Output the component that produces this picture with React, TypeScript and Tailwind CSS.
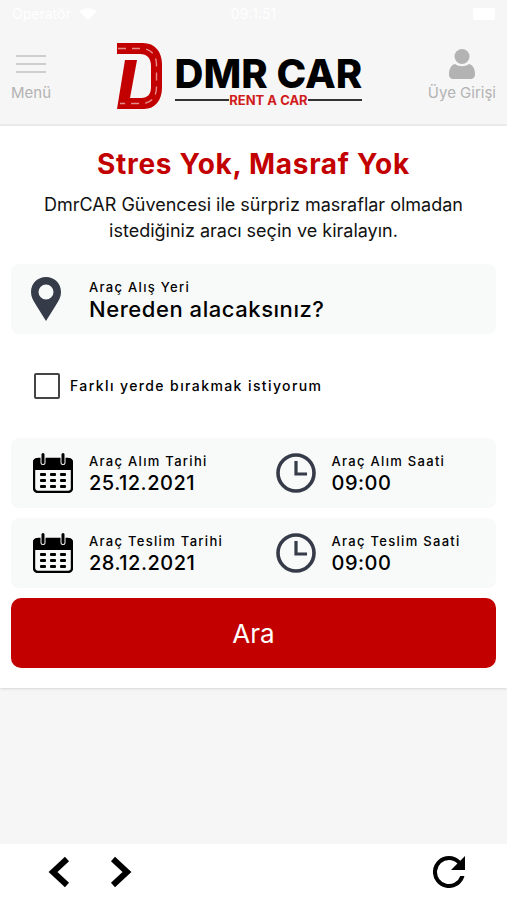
import { useState } from "react"
import type { ReactNode } from "react"
import { cva } from "class-variance-authority"

const fieldInput = cva("block h-6 w-full bg-transparent font-medium tracking-wide outline-none", {
  variants: {
    size: {
      md: "text-xl",
      lg: "text-[22px]",
    },
  },
  defaultVariants: { size: "md" },
})

function LogoMark() {
  return (
    <svg viewBox="0 0 46 66" className="h-[66px] w-[46px] shrink-0" aria-hidden="true">
      <path
        d="M0 0H26C38 0 45 9 45 21V45C45 57 38 66 27 66H0L8 17H20L13 55H24C31 55 34 51 34 44V23C34 15 30 11 23 11H0Z"
        fill="#c30000"
      />
      <path
        d="M1 5.500H24C34 5.500 39.500 12 39.500 22V44C39.500 54 34 60.500 25 60.500H3"
        fill="none"
        stroke="#e58d8d"
        strokeWidth="1.4"
        strokeDasharray="8 6"
      />
    </svg>
  )
}

function PinIcon() {
  return (
    <svg viewBox="0 0 30 44" className="h-11 w-[30px]" fill="#353b48" aria-hidden="true">
      <path
        fillRule="evenodd"
        d="M15 0C6.500 0 0 6.500 0 15C0 20 2 23 5 28L15 44L25 28C28 23 30 20 30 15C30 6.500 23.500 0 15 0ZM15 7.500A7.500 7.500 0 1 1 15 22.500A7.500 7.500 0 1 1 15 7.500Z"
      />
    </svg>
  )
}

function CalendarIcon() {
  return (
    <svg viewBox="0 0 40 40" className="size-10" aria-hidden="true">
      <rect x="1" y="6" width="38" height="33" rx="4" fill="none" stroke="#000" strokeWidth="2.400" />
      <path d="M0 17V9C0 6.500 2 5 4.500 5H35.500C38 5 40 6.500 40 9V17Z" />
      {[10, 30].map((x) => (
        <g key={x}>
          <rect x={x - 2.5} y="2" width="5" height="10" rx="2.500" fill="#f8faf9" />
          <rect x={x - 1.5} y="0" width="3" height="11" rx="1.500" />
        </g>
      ))}
      {[20, 26, 32].map((y) =>
        [7, 17, 27].map((x) => <rect key={`${x}-${y}`} x={x} y={y} width="6" height="3" rx="1" />),
      )}
    </svg>
  )
}

function ClockIcon() {
  return (
    <svg viewBox="0 0 40 40" className="size-10" fill="none" stroke="#353b48" aria-hidden="true">
      <circle cx="20" cy="20" r="18" strokeWidth="3.600" />
      <path d="M20 8V21H31" strokeWidth="3.200" />
    </svg>
  )
}

function Field({ icon, label, value, htmlId, size }: {
  icon: ReactNode
  label: string
  value: string
  htmlId: string
  size?: "md" | "lg"
}) {
  return (
    <div className="flex min-w-0 flex-1 items-center gap-4">
      {icon}
      <div className="min-w-0 flex-1">
        <label htmlFor={htmlId} className="block text-[13px] leading-5 font-medium tracking-widest whitespace-nowrap">
          {label}
        </label>
        <input id={htmlId} defaultValue={value} className={fieldInput({ size })} />
      </div>
    </div>
  )
}

export default function App() {
  const [otherPlace, setOtherPlace] = useState(false)

  return (
    <div className="flex min-h-screen flex-col bg-[#f6f6f6] font-[Inter,sans-serif] text-black">
      <header className="border-b-2 border-[#ececec]">
        {/* Status bar */}
        <div className="grid h-7 grid-cols-3 items-center px-3 text-sm text-white">
          <div className="flex items-center gap-2">
            <span>Operatör</span>
            <svg viewBox="0 0 18 13" className="h-3 w-[18px]" fill="#fff" aria-hidden="true">
              <path d="M9 13L0 4C5 -1 13 -1 18 4Z" />
            </svg>
          </div>
          <span className="text-center">09:1:51</span>
          <span className="h-3 w-[22px] justify-self-end rounded-xs bg-white" />
        </div>

        {/* Logo bar */}
        <div className="flex h-24 items-center justify-between px-[11px] text-[15px] leading-5 text-[#b3b3b3]">
          <button className="flex flex-col items-center gap-1">
            <svg viewBox="0 0 30 30" className="size-[30px]" stroke="#cecece" strokeWidth="2" aria-hidden="true">
              <path d="M0 7H30M0 15H30M0 23H30" />
            </svg>
            Menü
          </button>
          <a href="#" className="flex items-center gap-3">
            <LogoMark />
            <div className="pt-3 text-black">
              <div className="text-[40px] leading-9 font-extrabold whitespace-nowrap">DMR CAR</div>
              <div className="flex items-center">
                <span className="h-0.5 flex-1 bg-[#333]" />
                <span className="text-[13px] leading-4 font-bold text-[#d01c1c]">RENT A CAR</span>
                <span className="h-0.5 flex-1 bg-[#333]" />
              </div>
            </div>
          </a>
          <button className="flex flex-col items-center gap-1 whitespace-nowrap">
            <svg viewBox="0 0 26 30" className="h-[30px] w-[26px]" fill="#b3b3b3" aria-hidden="true">
              <circle cx="13" cy="7.500" r="7.500" />
              <path d="M6 15C10 18 16 18 20 15C24 16 26 20 26 25C26 28.500 24.500 30 21 30H5C1.500 30 0 28.500 0 25C0 20 2 16 6 15Z" />
            </svg>
            Üye Girişi
          </button>
        </div>
      </header>

      <main className="bg-white px-[11px] py-5 shadow-sm">
        <h1 className="text-center text-[28px] leading-9 font-bold tracking-wide text-[#c30000]">
          Stres Yok, Masraf Yok
        </h1>
        <p className="mx-auto mt-[10px] max-w-[440px] text-center text-lg leading-[26px] text-[#111]">
          DmrCAR Güvencesi ile sürpriz masraflar olmadan istediğiniz aracı seçin ve kiralayın.
        </p>

        <form className="mt-5" onSubmit={(e) => e.preventDefault()}>
          <div className="flex h-[70px] items-center rounded-lg bg-[#f8faf9] pl-5">
            <Field
              icon={<div className="w-[42px]"><PinIcon /></div>}
              label="Araç Alış Yeri"
              value="Nereden alacaksınız?"
              htmlId="place"
              size="lg"
            />
          </div>

          <label className="flex h-[104px] items-center gap-[10px] pl-[23px] text-sm font-medium tracking-widest">
            <input
              type="checkbox"
              checked={otherPlace}
              onChange={(e) => setOtherPlace(e.target.checked)}
              className="size-[26px] appearance-none rounded-xs border-2 border-[#444] bg-white checked:bg-[#353b48]"
            />
            Farklı yerde bırakmak istiyorum
          </label>

          <div className="space-y-[10px]">
            <div className="grid h-[70px] grid-cols-2 items-center rounded-lg bg-[#f8faf9] *:pl-[22px]">
              <Field icon={<CalendarIcon />} label="Araç Alım Tarihi" value="25.12.2021" htmlId="pickup-date" />
              <Field icon={<ClockIcon />} label="Araç Alım Saati" value="09:00" htmlId="pickup-time" />
            </div>
            <div className="grid h-[70px] grid-cols-2 items-center rounded-lg bg-[#f8faf9] *:pl-[22px]">
              <Field icon={<CalendarIcon />} label="Araç Teslim Tarihi" value="28.12.2021" htmlId="return-date" />
              <Field icon={<ClockIcon />} label="Araç Teslim Saati" value="09:00" htmlId="return-time" />
            </div>
            <button type="submit" className="h-[70px] w-full rounded-[10px] bg-[#c30000] text-[26px] text-white">
              Ara
            </button>
          </div>
        </form>
      </main>

      {/* Browser controls */}
      <nav className="mt-auto flex h-14 items-center bg-white px-[42px]">
        <button aria-label="Geri" className="px-1.5">
          <svg viewBox="0 0 22 32" className="h-8 w-[22px]" fill="none" stroke="#000" strokeWidth="6" aria-hidden="true">
            <path d="M19 3L5 16L19 29" />
          </svg>
        </button>
        <button aria-label="İleri" className="ml-7 px-1.5">
          <svg viewBox="0 0 22 32" className="h-8 w-[22px]" fill="none" stroke="#000" strokeWidth="6" aria-hidden="true">
            <path d="M3 3L17 16L3 29" />
          </svg>
        </button>
        <button aria-label="Yenile" className="ml-auto">
          <svg viewBox="4 4 16 16" className="size-8" aria-hidden="true">
            <path d="M17.650 6.350A7.960 7.960 0 0 0 12 4a8 8 0 1 0 7.730 10h-2.080A6 6 0 1 1 12 6c1.660 0 3.140.690 4.220 1.780L13 11h7V4z" />
          </svg>
        </button>
      </nav>
    </div>
  )
}
